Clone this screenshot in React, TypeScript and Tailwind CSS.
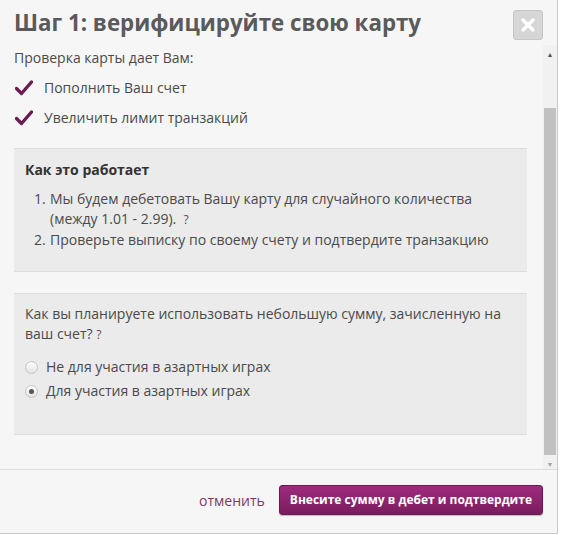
import React, { useState } from 'react';

const FONT = "'Open Sans', 'Noto Sans', sans-serif";

function Check() {
  return (
    <svg width="18" height="16" viewBox="0 0 18 16" className="shrink-0">
      <path d="M1.5 8.5 L6.5 13.5 L16.5 2" fill="none" stroke="#6b1d52" strokeWidth="3.4" strokeLinecap="round" strokeLinejoin="round" />
    </svg>
  );
}

function Radio({ checked }: { checked: boolean }) {
  return (
    <span className="w-[13px] h-[13px] rounded-full border border-[#c4c4c4] bg-gradient-to-b from-[#fdfdfd] to-[#e4e4e4] flex items-center justify-center shrink-0">
      {checked && <span className="w-[5px] h-[5px] rounded-full bg-[#555]" />}
    </span>
  );
}

export default function App() {
  const [choice, setChoice] = useState('yes');

  return (
    <div className="w-[562px] h-[535px] bg-white" style={{ fontFamily: FONT }}>
      <div className="w-[558px] h-[534px] bg-[#f6f6f6] border-r border-b border-[#c9c9c9] flex flex-col text-[#4a4a4a]">
        {/* header */}
        <div className="h-[45px] flex items-start justify-between pl-[14px] pr-[14px] pt-[7px]">
          <h1 className="text-[22.3px] leading-[32px] font-bold text-[#5a5a5a]">Шаг 1: верифицируйте свою карту</h1>
          <button className="mt-[3px] w-[30px] h-[30px] rounded-[3px] bg-[#d6d6d6] border border-[#c6c6c6] flex items-center justify-center">
            <svg width="16" height="16" viewBox="0 0 16 16">
              <path d="M3 3 L13 13 M13 3 L3 13" stroke="#fff" strokeWidth="3.4" strokeLinecap="round" />
            </svg>
          </button>
        </div>

        {/* body */}
        <div className="flex-1 flex min-h-0">
          <div className="flex-1 pl-[14px] pr-[16px] text-[14px] leading-[20px]">
            <p className="mt-[3px]">Проверка карты дает Вам:</p>
            <ul className="mt-[10px] space-y-[10px]">
              <li className="flex items-center gap-[11px] pl-[1px]"><Check />Пополнить Ваш счет</li>
              <li className="flex items-center gap-[11px] pl-[1px]"><Check />Увеличить лимит транзакций</li>
            </ul>

            <div className="mt-[20px] bg-[#ebebeb] border-t border-[#dcdcdc] border-b px-[11px] pt-[11px] pb-[21px]">
              <p className="font-bold text-[#333]">Как это работает</p>
              <ol className="mt-[9px] pl-[9px] leading-[20px]">
                <li className="flex"><span className="w-[16px] shrink-0">1.</span><span>Мы будем дебетовать Вашу карту для случайного количества (между 1.01 - 2.99).&nbsp;&nbsp;<span className="text-[#7b3a68] text-[12px]">?</span></span></li>
                <li className="flex"><span className="w-[16px] shrink-0">2.</span><span>Проверьте выписку по своему счету и подтвердите транзакцию</span></li>
              </ol>
            </div>

            <div className="mt-[21px] bg-[#ebebeb] border-t border-b border-[#dcdcdc] px-[11px] pt-[10px] pb-[33px]">
              <p className="leading-[20px]">Как вы планируете использовать небольшую сумму, зачисленную на ваш счет? <span className="text-[#7b3a68] text-[12px]">?</span></p>
              <div className="mt-[12px] space-y-[4px]">
                <label className="flex items-center gap-[8px] cursor-pointer" onClick={() => setChoice('no')}>
                  <Radio checked={choice === 'no'} />Не для участия в азартных играх
                </label>
                <label className="flex items-center gap-[8px] cursor-pointer" onClick={() => setChoice('yes')}>
                  <Radio checked={choice === 'yes'} />Для участия в азартных играх
                </label>
              </div>
            </div>
          </div>

          {/* scrollbar */}
          <div className="w-[14px] bg-[#f1f1f1] flex flex-col items-center">
            <span className="mt-[5px] h-[10px] flex items-center text-[#555] text-[7px] leading-none">▲</span>
            <div className="mt-[48px] w-[12px] h-[348px] bg-[#c1c1c1]" />
            <span className="mt-[4px] h-[10px] flex items-center text-[#a3a3a3] text-[7px] leading-none">▼</span>
          </div>
        </div>

        {/* footer */}
        <div className="h-[64px] border-t border-[#dddddd] flex items-center justify-end gap-[14px] pr-[14px] pb-[3px]">
          <a className="text-[14px] text-[#7b3a68]">отменить</a>
          <button className="h-[30px] px-[10px] rounded-[3px] border border-[#6c1a52] bg-gradient-to-b from-[#9e2b7e] to-[#7b1c5e] text-white text-[12px] font-bold shadow-[0_1px_1px_rgba(0,0,0,0.25)]">
            Внесите сумму в дебет и подтвердите
          </button>
        </div>
      </div>
    </div>
  );
}
